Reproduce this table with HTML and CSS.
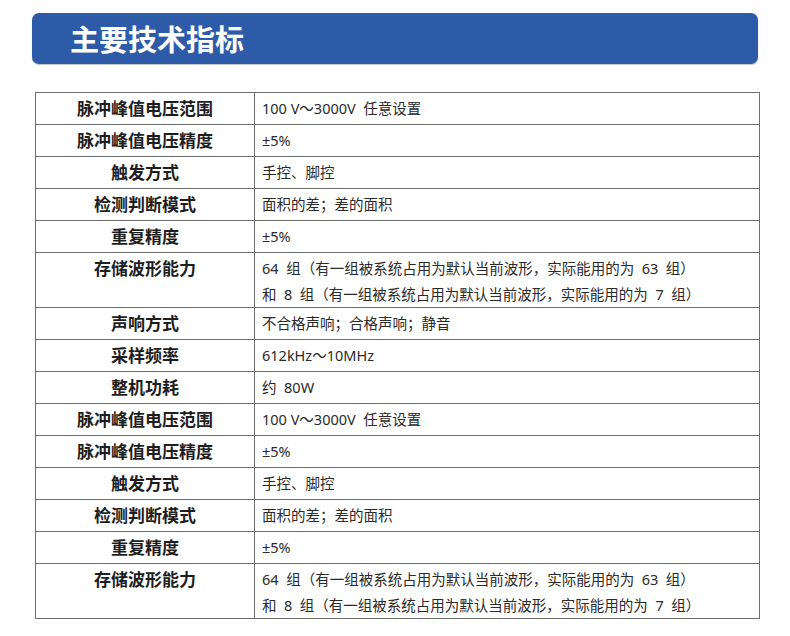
FILE: index.html
```html
<!DOCTYPE html>
<html lang="zh-CN">
<head>
<meta charset="utf-8">
<title>主要技术指标</title>
<link rel="stylesheet" href="styles.css">
</head>
<body>
<div class="page">
  <div class="banner"><h1 class="banner-title">主要技术指标</h1></div>
  <div class="spec">
    <div class="row"><div class="k">脉冲峰值电压范围</div><div class="v">100 V～3000V&nbsp; 任意设置</div></div>
    <div class="row"><div class="k">脉冲峰值电压精度</div><div class="v">±5%</div></div>
    <div class="row"><div class="k">触发方式</div><div class="v">手控、脚控</div></div>
    <div class="row"><div class="k">检测判断模式</div><div class="v">面积的差；差的面积</div></div>
    <div class="row"><div class="k">重复精度</div><div class="v">±5%</div></div>
    <div class="row multi"><div class="k">存储波形能力</div><div class="v"><div class="ln">64&nbsp; 组（有一组被系统占用为默认当前波形，实际能用的为&nbsp; 63&nbsp; 组）</div><div class="ln">和&nbsp; 8&nbsp; 组（有一组被系统占用为默认当前波形，实际能用的为&nbsp; 7&nbsp; 组）</div></div></div>
    <div class="row"><div class="k">声响方式</div><div class="v">不合格声响；合格声响；静音</div></div>
    <div class="row"><div class="k">采样频率</div><div class="v">612kHz～10MHz</div></div>
    <div class="row"><div class="k">整机功耗</div><div class="v">约&nbsp; 80W</div></div>
    <div class="row"><div class="k">脉冲峰值电压范围</div><div class="v">100 V～3000V&nbsp; 任意设置</div></div>
    <div class="row"><div class="k">脉冲峰值电压精度</div><div class="v">±5%</div></div>
    <div class="row"><div class="k">触发方式</div><div class="v">手控、脚控</div></div>
    <div class="row"><div class="k">检测判断模式</div><div class="v">面积的差；差的面积</div></div>
    <div class="row"><div class="k">重复精度</div><div class="v">±5%</div></div>
    <div class="row multi"><div class="k">存储波形能力</div><div class="v"><div class="ln">64&nbsp; 组（有一组被系统占用为默认当前波形，实际能用的为&nbsp; 63&nbsp; 组）</div><div class="ln">和&nbsp; 8&nbsp; 组（有一组被系统占用为默认当前波形，实际能用的为&nbsp; 7&nbsp; 组）</div></div></div>
  </div>
</div>
</body>
</html>
```

FILE: styles.css
```css
html, body {
  margin: 0;
  padding: 0;
  background: #ffffff;
}
body {
  font-family: "Noto Sans CJK SC", "Noto Sans", sans-serif;
  color: #222;
}
.page {
  width: 790px;
  height: 636px;
  overflow: hidden;
  padding-top: 13px;
  box-sizing: border-box;
}
.banner {
  margin: 0 32px;
  height: 51px;
  background: #2e5ba8;
  border-radius: 7px;
  box-shadow: 0 1px 1px rgba(0,0,0,0.25);
  display: flex;
  align-items: center;
  padding-left: 38px;
}
.banner-title {
  margin: 0;
  font-size: 29px;
  font-weight: 700;
  color: #ffffff;
  line-height: 1;
}
.spec {
  margin: 28px 0 0 35px;
  width: 725px;
  box-sizing: border-box;
  border: 1px solid #6e6e6e;
}
.row {
  display: grid;
  grid-template-columns: 219px 1fr;
  height: 32px;
  border-top: 1px solid #6e6e6e;
  box-sizing: border-box;
}
.row:first-child {
  border-top: none;
  height: 31px;
}
.row.multi {
  height: 55px;
}
.k {
  border-right: 1px solid #6e6e6e;
  box-sizing: border-box;
  text-align: center;
  font-size: 17px;
  font-weight: 700;
  color: #1e1e1e;
  height: 31px;
  line-height: 30px;
  overflow: hidden;
  white-space: nowrap;
}
.multi .k {
  height: 54px;
  line-height: 30px;
}
.v {
  font-family: "Noto Sans", "Noto Sans CJK SC", sans-serif;
  font-size: 14.5px;
  color: #2a2a2a;
  padding-left: 7px;
  height: 31px;
  line-height: 30px;
  overflow: hidden;
  white-space: nowrap;
}
.multi .v {
  height: 54px;
  padding-top: 2px;
  box-sizing: border-box;
}
.ln {
  height: 26px;
  line-height: 26px;
}
```
